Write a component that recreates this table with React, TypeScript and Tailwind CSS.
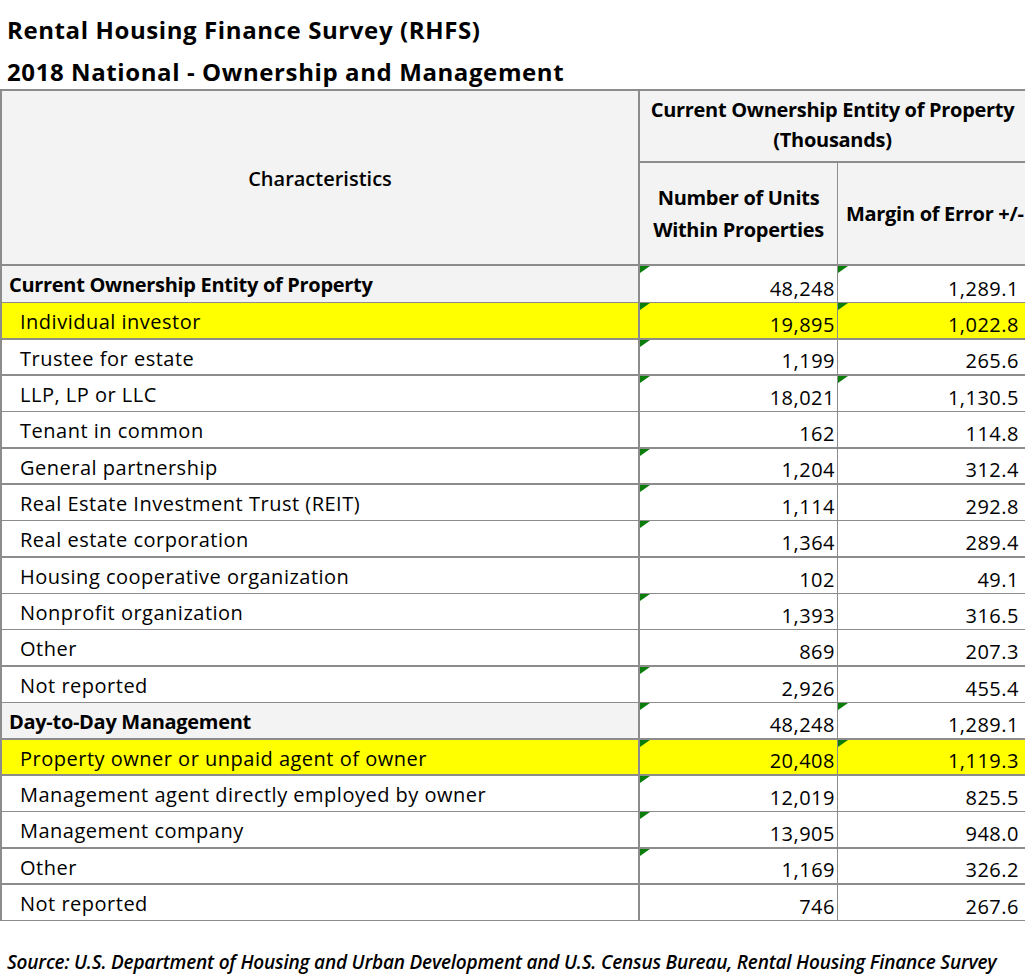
import React from "react";

type Row = {
  label: string;
  units: string;
  moe: string;
  section?: boolean;
  hl?: boolean;
  t2?: boolean; // green marker, units cell
  t3?: boolean; // green marker, margin cell
  h: number;
  thick: boolean;
};

const rows: Row[] = [
  { label: "Current Ownership Entity of Property", units: "48,248", moe: "1,289.1", section: true, t2: true, t3: true, h: 37, thick: false },
  { label: "Individual investor", units: "19,895", moe: "1,022.8", hl: true, t2: true, t3: true, h: 37, thick: true },
  { label: "Trustee for estate", units: "1,199", moe: "265.6", t2: true, h: 36, thick: true },
  { label: "LLP, LP or LLC", units: "18,021", moe: "1,130.5", t2: true, t3: true, h: 36, thick: false },
  { label: "Tenant in common", units: "162", moe: "114.8", h: 37, thick: true },
  { label: "General partnership", units: "1,204", moe: "312.4", t2: true, h: 36, thick: true },
  { label: "Real Estate Investment Trust (REIT)", units: "1,114", moe: "292.8", t2: true, h: 36, thick: false },
  { label: "Real estate corporation", units: "1,364", moe: "289.4", t2: true, h: 37, thick: true },
  { label: "Housing cooperative organization", units: "102", moe: "49.1", h: 36, thick: false },
  { label: "Nonprofit organization", units: "1,393", moe: "316.5", t2: true, h: 36, thick: false },
  { label: "Other", units: "869", moe: "207.3", h: 37, thick: true },
  { label: "Not reported", units: "2,926", moe: "455.4", t2: true, h: 36, thick: false },
  { label: "Day-to-Day Management", units: "48,248", moe: "1,289.1", section: true, t2: true, t3: true, h: 37, thick: true },
  { label: "Property owner or unpaid agent of owner", units: "20,408", moe: "1,119.3", hl: true, t2: true, t3: true, h: 36, thick: true },
  { label: "Management agent directly employed by owner", units: "12,019", moe: "825.5", t2: true, h: 36, thick: false },
  { label: "Management company", units: "13,905", moe: "948.0", t2: true, h: 37, thick: true },
  { label: "Other", units: "1,169", moe: "326.2", t2: true, h: 36, thick: true },
  { label: "Not reported", units: "746", moe: "267.6", h: 36, thick: false },
];

const Marker = () => (
  <svg className="absolute left-0 top-0" width="10" height="7" viewBox="0 0 10 7">
    <polygon points="0,0 10,0 0,7" fill="#0b7d0b" />
  </svg>
);

const DataRow = ({ r }: { r: Row }) => {
  const bg = r.hl ? "bg-[#ffff00]" : "bg-white";
  return (
    <div
      className={`flex border-[#8c8c8c] ${r.thick ? "border-b-2" : "border-b"} ${bg}`}
      style={{ height: r.h }}
    >
      <div
        className={`w-[638px] shrink-0 border-r-2 border-[#8c8c8c] pt-[6px] leading-[25px] whitespace-nowrap ${
          r.section ? "bg-[#f3f3f3] pl-[7px] font-bold tracking-[-0.3px]" : "pl-[18px]"
        }`}
      >
        {r.label}
      </div>
      <div className="relative flex w-[198px] shrink-0 items-end justify-end border-r border-[#8c8c8c] pr-[2px] leading-[26px]">
        {r.t2 && <Marker />}
        {r.units}
      </div>
      <div className="relative flex w-[184px] shrink-0 items-end justify-end pr-[3px] leading-[26px]">
        {r.t3 && <Marker />}
        {r.moe}
      </div>
    </div>
  );
};

export default function App() {
  return (
    <div className="h-[975px] w-[1025px] overflow-hidden bg-white text-black font-['Open_Sans',sans-serif] text-[20px] tracking-[0.5px]">
      <div className="pl-[7px] pt-[12px] font-bold text-[24px] tracking-[0.6px]">
        <div className="leading-[35px]">Rental Housing Finance Survey (RHFS)</div>
        <div className="pt-[7px] leading-[35px]">2018 National - Ownership and Management</div>
      </div>

      <div className="border-t-2 border-l-2 border-[#8c8c8c]">
        <div className="flex h-[175px] border-b-2 border-[#8c8c8c] bg-[#f3f3f3]">
          <div className="flex w-[638px] shrink-0 items-center justify-center border-r-2 border-[#8c8c8c] pt-[2px] font-semibold tracking-[0px]">
            Characteristics
          </div>
          <div className="flex w-[385px] shrink-0 flex-col font-bold tracking-[-0.3px]">
            <div className="flex h-[72px] flex-col items-center justify-center border-b-2 border-[#8c8c8c] pb-[2px] leading-[30px]">
              <div>Current Ownership Entity of Property</div>
              <div>(Thousands)</div>
            </div>
            <div className="flex flex-1">
              <div className="flex w-[198px] shrink-0 flex-col items-center justify-center border-r border-[#8c8c8c] leading-[32px]">
                <div>Number of Units</div>
                <div>Within Properties</div>
              </div>
              <div className="flex flex-1 items-center overflow-hidden whitespace-nowrap pl-[8px]">
                Margin of Error +/-
              </div>
            </div>
          </div>
        </div>
        {rows.map((r, i) => (
          <DataRow key={i} r={r} />
        ))}
      </div>

      <div className="pl-[7px] pt-[30px] text-[19px] font-semibold italic leading-[22px] tracking-[-0.2px]">
        Source: U.S. Department of Housing and Urban Development and U.S. Census Bureau, Rental Housing Finance Survey
      </div>
    </div>
  );
}
